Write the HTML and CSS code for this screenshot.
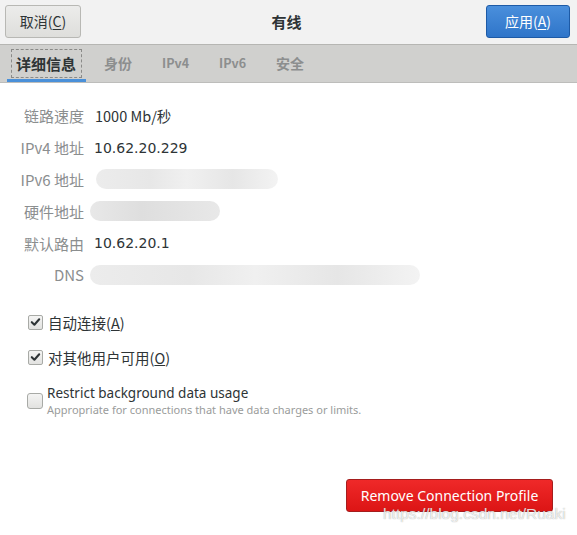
FILE: index.html
```html
<!DOCTYPE html>
<html lang="zh">
<head>
<meta charset="utf-8">
<link rel="stylesheet" href="styles.css">
</head>
<body>
<div class="window">
  <header class="header">
    <button class="btn btn-cancel">取消(<u>C</u>)</button>
    <div class="title">有线</div>
    <button class="btn btn-apply">应用(<u>A</u>)</button>
  </header>
  <nav class="tabs">
    <div class="tab active"><span class="focus">详细信息</span></div>
    <div class="tab">身份</div>
    <div class="tab latin">IPv4</div>
    <div class="tab latin">IPv6</div>
    <div class="tab">安全</div>
  </nav>
  <main class="content">
    <div class="details">
      <div class="label">链路速度</div><div class="value">1000 Mb/秒</div>
      <div class="label">IPv4 地址</div><div class="value ip">10.62.20.229</div>
      <div class="label">IPv6 地址</div><div class="value"><span class="blur blur-ipv6"></span></div>
      <div class="label">硬件地址</div><div class="value"><span class="blur blur-hw"></span></div>
      <div class="label">默认路由</div><div class="value ip">10.62.20.1</div>
      <div class="label">DNS</div><div class="value"><span class="blur blur-dns"></span></div>
    </div>
    <div class="options">
      <label class="option">
        <span class="check checked"><svg viewBox="0 0 14 14" width="14" height="14"><path d="M3 7.2 L5.8 10 L11 4" fill="none" stroke="#2e3436" stroke-width="2.2" stroke-linecap="round" stroke-linejoin="round"/></svg></span>
        <span class="opt-text">自动连接(<u>A</u>)</span>
      </label>
      <label class="option">
        <span class="check checked"><svg viewBox="0 0 14 14" width="14" height="14"><path d="M3 7.2 L5.8 10 L11 4" fill="none" stroke="#2e3436" stroke-width="2.2" stroke-linecap="round" stroke-linejoin="round"/></svg></span>
        <span class="opt-text">对其他用户可用(<u>O</u>)</span>
      </label>
      <label class="option option-multi">
        <span class="check unchecked"></span>
        <span class="opt-block">
          <span class="opt-title">Restrict background data usage</span>
          <span class="opt-sub">Appropriate for connections that have data charges or limits.</span>
        </span>
      </label>
    </div>
    <footer class="footer">
      <button class="btn btn-remove">Remove Connection Profile</button>
    </footer>
  </main>
  <div class="watermark">https://blog.csdn.net/Ruaki</div>
</div>
</body>
</html>
```

FILE: styles.css
```css
* { box-sizing: border-box; }
html, body { margin: 0; padding: 0; }
body {
  width: 577px;
  height: 535px;
  overflow: hidden;
  background: #ffffff;
  font-family: "Noto Sans CJK SC", "Noto Sans", sans-serif;
  color: #2e3436;
}
.window {
  position: relative;
  width: 577px;
  height: 535px;
  display: flex;
  flex-direction: column;
}
.header {
  height: 45px;
  background: #f2f2f2;
  border-bottom: 1px solid #b6b6b3;
  display: flex;
  align-items: flex-start;
  justify-content: space-between;
  padding: 5px 7px 0 5px;
  flex: none;
}
.btn {
  font-family: "Noto Sans CJK SC", "Noto Sans", sans-serif;
  font-size: 14px;
  height: 33px;
  border-radius: 3px;
  padding: 0;
  line-height: 31px;
}
.btn u { text-underline-offset: 2px; }
.btn-cancel {
  width: 76px;
  color: #2e3436;
  background: linear-gradient(#ececeb, #dededb);
  border: 1px solid #b8b8b4;
}
.btn-apply {
  width: 84px;
  color: #ffffff;
  background: linear-gradient(#4a8fdc, #2f75c9);
  border: 1px solid #1d5aa6;
}
.title {
  font-size: 15px;
  font-weight: bold;
  line-height: 33px;
  color: #2e3436;
  padding-left: 6px;
}
.tabs {
  height: 38px;
  background: #d0d0ce;
  border-bottom: 1px solid #bdbdbb;
  display: flex;
  gap: 6px;
  padding-left: 7px;
  flex: none;
}
.tab {
  padding: 0 12px;
  font-size: 14px;
  font-weight: bold;
  color: #8c8e8e;
  line-height: 36px;
  height: 37px;
}
.tab.latin {
  font-size: 12.5px;
}
.tab.active {
  padding: 4px 4px 0 4px;
  color: #2e3436;
  border-bottom: 3px solid #4a90d9;
  line-height: 26px;
  font-size: 15px;
}
.tab.active .focus {
  display: block;
  border: 1px dashed #8a8a88;
  height: 29px;
  line-height: 27px;
  padding: 0 5px 0 4px;
}
.content {
  flex: 1;
  display: flex;
  flex-direction: column;
}
.details {
  display: grid;
  grid-template-columns: 84px 1fr;
  grid-auto-rows: 31.8px;
  column-gap: 11px;
  align-items: center;
  padding-top: 17px;
  font-size: 14.5px;
}
.label {
  text-align: right;
  color: #8b8e8f;
  font-size: 15px;
}
.value {
  color: #2e3436;
  display: flex;
  align-items: center;
}
.value.ip {
  font-family: "DejaVu Sans", sans-serif;
  font-size: 14px;
  margin-left: -1px;
}
.blur {
  display: block;
  height: 20px;
  border-radius: 10px;
  background: linear-gradient(90deg, #ececec, #e7e7e7 30%, #f0f0f0 50%, #e6e6e6 75%, #f3f3f3);
}
.blur-ipv6 { width: 182px; margin-left: 1px; }
.blur-hw { width: 130px; margin-left: -5px; background: linear-gradient(90deg, #e8e8e8, #dedede 40%, #e3e3e3 70%, #e8e8e8); }
.blur-dns { width: 330px; margin-left: -5px; }
.options {
  margin-top: 14px;
  padding-left: 27px;
  display: flex;
  flex-direction: column;
}
.option {
  display: flex;
  align-items: center;
  height: 35px;
  gap: 5px;
  font-size: 14.5px;
  color: #2e3436;
}
.option .check { margin-left: 1px; }
.check {
  width: 15px;
  height: 15px;
  border: 1px solid #a8aaa6;
  border-radius: 2px;
  background: linear-gradient(#f4f4f3, #e2e2e0);
  display: flex;
  align-items: center;
  justify-content: center;
  flex: none;
}
.check svg { display: block; }
.option .check.unchecked {
  width: 16px;
  height: 16px;
  border-radius: 3px;
  margin-left: 0;
}
.option-multi {
  height: auto;
  margin-top: 9px;
  gap: 4px;
  align-items: center;
}
.opt-block {
  display: flex;
  flex-direction: column;
}
.opt-title {
  font-family: "Noto Sans", sans-serif;
  font-size: 13.5px;
  line-height: 18px;
  color: #2e3436;
}
.opt-sub {
  font-family: "Noto Sans", sans-serif;
  font-size: 11px;
  line-height: 16px;
  color: #9a9c9b;
}
.footer {
  margin-top: auto;
  display: flex;
  justify-content: flex-end;
  padding: 0 24px 23px 0;
}
.btn-remove {
  width: 207px;
  color: #ffffff;
  font-family: "Noto Sans", sans-serif;
  font-size: 14px;
  background: linear-gradient(#ef2929, #dc1515);
  border: 1px solid #a51d1d;
}
.watermark {
  position: absolute;
  left: 383px;
  top: 505px;
  font-family: "Liberation Sans", sans-serif;
  font-size: 15.5px;
  white-space: nowrap;
  color: rgba(255, 255, 255, 0.8);
  text-shadow: 0 0 1px rgba(110, 110, 110, 0.7);
}
```
